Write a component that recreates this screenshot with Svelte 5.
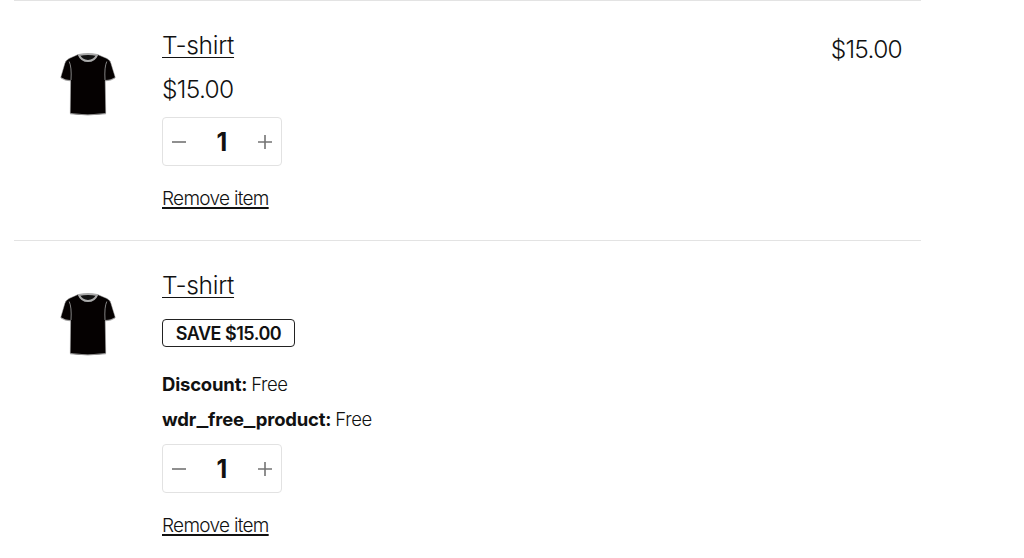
<script lang="ts">
  type Item = {
    name: string;
    price?: string;
    save?: string;
    details: { label: string; value: string }[];
    total?: string;
    quantity: number;
  };

  let items = $state<Item[]>([
    { name: "T-shirt", price: "$15.00", details: [], total: "$15.00", quantity: 1 },
    {
      name: "T-shirt",
      save: "Save $15.00",
      details: [
        { label: "Discount:", value: "Free" },
        { label: "wdr_free_product:", value: "Free" },
      ],
      quantity: 1,
    },
  ]);

  function remove(item: Item) {
    items = items.filter((i) => i !== item);
  }
</script>

<main class="cart">
  {#each items as item}
    <article class="row">
      <svg class="shirt" viewBox="0 0 56 63" aria-hidden="true">
        <path
          d="M18 1.5 9 5.5Q6 7 4.8 10.5L.7 24.5Q5 27.5 10.6 27.5L10.2 60.5Q27 63.5 45.8 60.5L45.2 27.5Q51 27.5 55.3 24.5L51 10.5Q50 7 47 5.5L37.5 1.5Q28 4 18 1.5Z"
          fill="#050101"
          stroke="#b5b5b5"
          stroke-width=".5"
        />
        <path d="M9.2 8.5Q11.8 14 11 27M46.8 8.5Q44.2 14 45 27" fill="none" stroke="#929292" stroke-width=".9" />
        <path d="M19 2Q28 .2 37 2Q34.5 8 28 8T19 2Z" fill="#111" stroke="#aaa" stroke-width="2" />
        <path d="M1 25Q5 27.8 10.2 27.8M45.8 27.8Q51 27.8 55 25M10.2 60.8Q28 63 45.8 60.8" fill="none" stroke="#999" stroke-width=".8" />
      </svg>

      <div class="info">
        <a class="name" href="#product">{item.name}</a>
        {#if item.price}
          <div class="price">{item.price}</div>
        {/if}
        {#if item.save}
          <div class="badge">{item.save}</div>
        {/if}
        {#if item.details.length}
          <ul class="details">
            {#each item.details as detail}
              <li>
                <b>{#each detail.label as char}{#if char === "_"}<span class="underscore">_</span>{:else}{char}{/if}{/each}</b>
                <span>{detail.value}</span>
              </li>
            {/each}
          </ul>
        {/if}
        <div class="quantity">
          <button aria-label="Decrease quantity" onclick={() => item.quantity > 1 && item.quantity--}>
            <svg viewBox="0 0 14 14"><path d="M0 7H14" /></svg>
          </button>
          <span>{item.quantity}</span>
          <button aria-label="Increase quantity" onclick={() => item.quantity++}>
            <svg viewBox="0 0 14 14"><path d="M0 7H14M7 0V14" /></svg>
          </button>
        </div>
        <button class="remove" onclick={() => remove(item)}>Remove item</button>
      </div>

      {#if item.total}
        <div class="total">{item.total}</div>
      {/if}
    </article>
  {/each}
</main>

<style>
  :global(body) {
    background: #fff;
    overflow: hidden;
  }

  .cart {
    width: 907px;
    margin-left: 14px;
    color: #111;
    font-family: Inter, "Liberation Sans", sans-serif;
    font-weight: 300;
  }

  .row {
    display: grid;
    grid-template-columns: 102px 1fr auto;
    box-sizing: border-box;
    padding: 29px 19px 29px 46px;
    border-top: 1px solid #e3e3e3;
  }

  .shirt {
    width: 56px;
    height: 63px;
    margin-top: 23px;
  }

  .info {
    display: flex;
    flex-direction: column;
    align-items: flex-start;
  }

  .name,
  .price,
  .total {
    font-size: 24.5px;
    line-height: 30px;
    white-space: nowrap;
  }

  .name {
    color: inherit;
    letter-spacing: -0.3px;
    text-decoration-thickness: 1px;
    text-underline-offset: 3px;
  }

  .price,
  .total {
    letter-spacing: -0.7px;
  }

  .price {
    margin-top: 14px;
  }

  .total {
    margin-top: 4px;
  }

  .badge {
    box-sizing: border-box;
    width: 133px;
    height: 28px;
    margin-top: 19px;
    border: 1px solid #222;
    border-radius: 4px;
    font-size: 18px;
    font-weight: 600;
    line-height: 28px;
    letter-spacing: -0.5px;
    text-align: center;
    text-transform: uppercase;
    white-space: nowrap;
  }

  .details {
    margin: 25px 0 0;
    padding: 0;
    list-style: none;
    font-size: 18.5px;
    line-height: 24px;
    letter-spacing: -0.4px;

    & li {
      display: flex;
      gap: 4px;
    }

    & li + li {
      margin-top: 11px;
    }

    & b {
      font-weight: 700;
      letter-spacing: -0.2px;
    }

    & .underscore {
      display: inline-block;
      transform: scaleX(1.35);
      margin: 0 1.7px;
    }
  }

  .quantity {
    display: flex;
    align-items: center;
    justify-content: space-between;
    box-sizing: border-box;
    width: 120px;
    height: 49px;
    margin-top: 13px;
    padding: 1px 9px 0;
    border: 1px solid #e2e2e2;
    border-radius: 4px;

    & span {
      font-size: 25px;
      font-weight: 700;
    }

    & button {
      display: flex;
      padding: 0;
      border: 0;
      background: none;
    }

    & svg {
      width: 14px;
      height: 14px;
      stroke: #747474;
      stroke-width: 1.6;
    }
  }

  .remove {
    margin-top: 21px;
    padding: 0;
    border: 0;
    background: none;
    color: inherit;
    font: inherit;
    font-size: 19px;
    line-height: 24px;
    letter-spacing: -0.7px;
    text-decoration: underline;
    text-decoration-thickness: 1.5px;
    text-underline-offset: 2px;
  }
</style>
